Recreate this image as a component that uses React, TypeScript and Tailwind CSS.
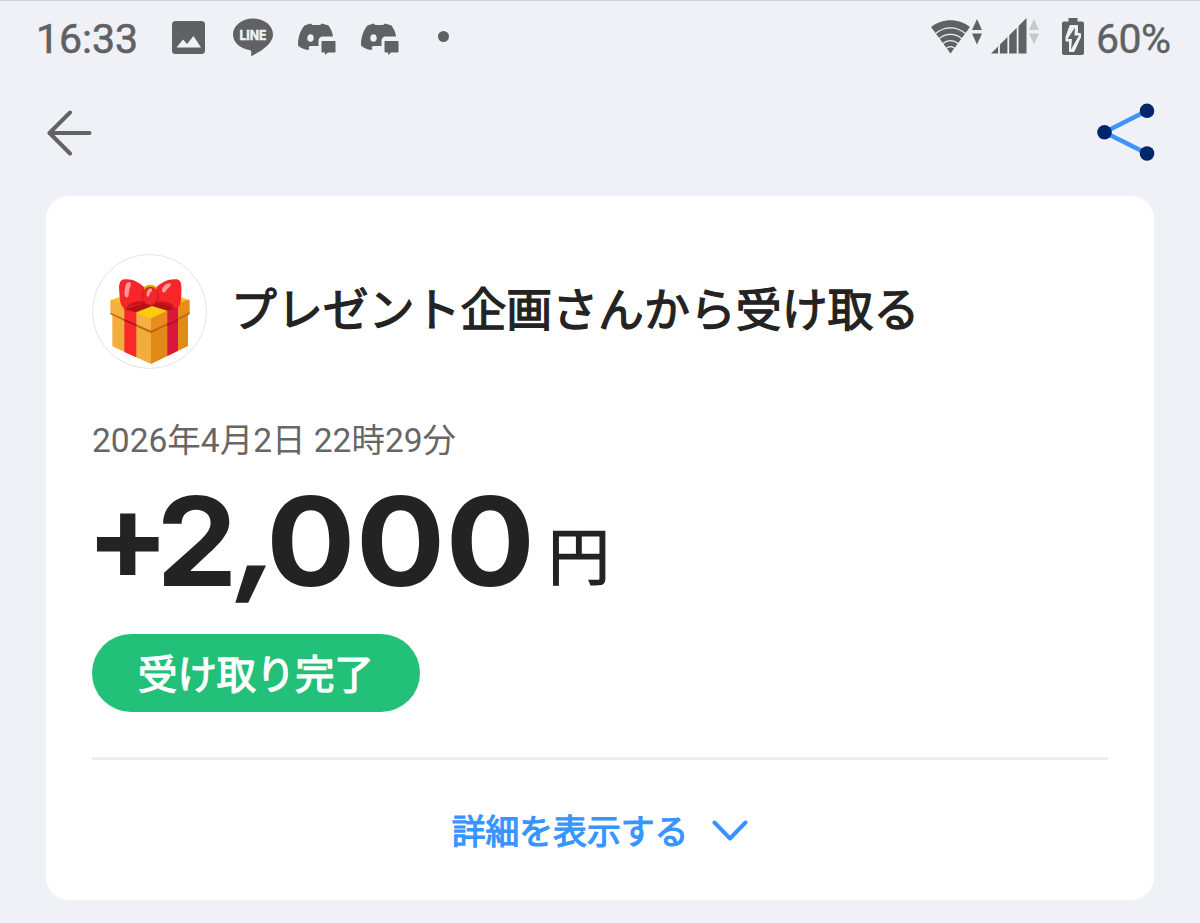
import type { ReactNode } from "react";

function ImageIcon() {
  return (
    <svg width="33" height="33" viewBox="0 0 33 33" className="block">
      <rect width="33" height="33" rx="3.5" fill="#5f6164" />
      <path d="M4.5 26.5L11 18.5L15 23L21.5 15L29 26.5Z" fill="#f0f1f6" />
    </svg>
  );
}

function LineIcon() {
  return (
    <svg width="40" height="39" viewBox="0 0 40 39" className="block">
      <path d="M20 0.5C9 0.5 0 7.500 0 16.500C0 24.500 7 30.500 16.500 32C18.500 32.500 18.500 33.500 18 38C23 36 40 27.500 40 16.500C40 7.500 31 0.500 20 0.500Z" fill="#5f6164" />
      <text x="20" y="21.500" textAnchor="middle" textLength="27" lengthAdjust="spacingAndGlyphs" fill="#f0f1f6" stroke="#f0f1f6" strokeWidth="0.3" className="font-['Inter',sans-serif] text-[12.5px] font-extrabold">LINE</text>
    </svg>
  );
}

function DiscordIcon() {
  return (
    <svg width="38" height="32" viewBox="0 0 38 32" className="block">
      <path d="M6.500 2.500L12.500 0.500L14.500 2H22L24 0.500L30.500 2.500C33 6 34.500 9.500 35 13.500H25.500C22 13.500 20.500 15.500 20.500 18V23H12L10.500 24.500L11.500 26L9.500 27C5.500 26.500 2 24.500 0 22.500C0 14 2 8 6.500 2.500Z" fill="#5f6164" />
      <ellipse cx="12.500" cy="15" rx="3.200" ry="3.800" fill="#f0f1f6" />
      <path d="M24.500 18H36.500Q37.500 18 37.500 19V28.500Q37.500 29.500 36.500 29.500H30L27 32V29.500H24.500Q23.500 29.500 23.500 28.500V19Q23.500 18 24.500 18Z" fill="#5f6164" />
    </svg>
  );
}

function Arrows({ color }: { color: string }) {
  return (
    <svg width="10" height="26" viewBox="0 0 10 26" className="block" fill={color}>
      <path d="M5 0L10 11H0Z" />
      <path d="M0 14.500H10L5 25.500Z" />
    </svg>
  );
}

function WifiIcon() {
  return (
    <svg width="39" height="34" viewBox="0 0 39 34" className="block">
      <path d="M0 7C11 -2 28 -2 39 7L19.500 33.500Z" fill="#5f6164" />
      <g fill="none" stroke="#f0f1f6" strokeWidth="1.200">
        <path d="M4.500 13.500C14 6 25 6 34.500 13.500" />
        <path d="M8 18.800C15 13 24 13 31 18.800" />
        <path d="M11.500 23.800C17 19.500 22 19.500 27.500 23.800" />
        <path d="M15 28.500C18 26 21 26 24 28.500" />
      </g>
    </svg>
  );
}

function SignalIcon() {
  return (
    <svg width="36" height="36" viewBox="0 0 36 36" className="block">
      <path d="M0 35.500L35.500 0V35.500Z" fill="#5f6164" />
      <path d="M8 25V36M17.300 16V36M26.600 7V36" stroke="#f0f1f6" strokeWidth="1.800" />
    </svg>
  );
}

function BatteryIcon() {
  return (
    <svg width="22" height="37" viewBox="0 0 22 37" className="block">
      <path d="M6.500 0H15.500V3.500H20Q22 3.500 22 5.500V35Q22 37 20 37H2Q0 37 0 35V5.500Q0 3.500 2 3.500H6.500Z" fill="#5f6164" />
      <path d="M8 7.500H15.500V15.500H18.500V19L12 33.500H7.500V23H4V19Z" fill="#f0f1f6" stroke="#f0f1f6" strokeWidth="1" strokeLinejoin="round" />
      <path d="M13 9.500L5.500 21H10L9 31.500L17 17.500H12.500Z" fill="#5f6164" />
    </svg>
  );
}

function BackIcon() {
  return (
    <svg width="46" height="46" viewBox="0 0 46 46" fill="none" stroke="#636363" strokeWidth="4" strokeLinecap="round" strokeLinejoin="round" className="block">
      <path d="M43.500 23H3.500M24 2.500L3.500 23L24 43.500" />
    </svg>
  );
}

function ShareIcon() {
  return (
    <svg width="58" height="58" viewBox="0 0 58 58" className="block">
      <path d="M50 7.800L7.500 29.300L50 50.500" fill="none" stroke="#3f93fb" strokeWidth="4.500" />
      <g fill="#00266b">
        <circle cx="50" cy="7.800" r="7.300" />
        <circle cx="7.500" cy="29.300" r="7.300" />
        <circle cx="50" cy="50.500" r="7.300" />
      </g>
    </svg>
  );
}

function GiftIcon() {
  return (
    <svg width="115" height="115" viewBox="36 41 345 345" className="block">
      <circle cx="208.500" cy="213.500" r="171" fill="#fff" stroke="#e4e4e6" strokeWidth="3" />
      {/* box */}
      <path d="M93 180L212 136L328 180L215 232Z" fill="#fcc21b" />
      <path d="M97 212L213 268V371L97 318Z" fill="#f3ad3c" />
      <path d="M213 268L324 212V317L213 371Z" fill="#e28a18" />
      <path d="M91 181Q92 175 99 179L213 231V275L91 219Z" fill="#f6b042" />
      <path d="M213 231L322 178Q329 176 329 183V218L213 275Z" fill="#e88d1c" />
      <path d="M91 217L213 271L329 216V222L213 279L91 222Z" fill="#bd6813" />
      <path d="M168 219L218 197L264 210L213 234Z" fill="#fccb0b" />
      {/* ribbon */}
      <path d="M133 195L169 195V351L133 335Z" fill="#f9292b" />
      <path d="M262 200L294 190V331L262 347Z" fill="#d9163b" />
      <path d="M133 236L169 252V258L133 242ZM262 252L294 236V242L262 258Z" fill="#b70f24" />
      <path d="M133 191L208 178L294 190V204L262 211L216 197L169 216L133 207Z" fill="#b61216" />
      {/* bow */}
      <ellipse cx="211" cy="148" rx="21" ry="15" fill="#f4a20b" />
      <path d="M193 141C177 124 154 114 133 117C117 119 116 136 118 154C119 178 121 202 138 206C153 198 178 192 193 190Z" fill="#f6262a" />
      <path d="M229 141C245 124 268 114 291 117C306 120 305 140 304 158C303 182 302 202 287 205C270 196 247 190 231 190Z" fill="#f6262a" />
      <path d="M138 202C151 185 176 179 192 185V192C173 191 153 197 138 202ZM230 185C249 180 274 186 286 201C270 196 250 191 230 192Z" fill="#c61519" />
      <ellipse cx="211" cy="168" rx="24" ry="27" fill="#f0282b" stroke="#c3161b" strokeWidth="3" />
      <path d="M136 137C140 124 151 121 153 132C151 142 147 148 146 164C144 176 134 171 133 160Z" fill="#fb9a9b" />
      <path d="M246 146C252 134 264 126 272 130C276 137 262 142 258 152C252 160 244 157 246 146Z" fill="#fb9a9b" />
      <path d="M200 160C201 147 211 140 216 146C218 153 210 155 208 164C206 172 199 170 200 160Z" fill="#fb9a9b" />
    </svg>
  );
}

function StatusBar() {
  return (
    <div className="flex h-[78px] items-start border-t border-[#cfd0d5] pl-[36px] font-['Roboto',sans-serif] text-[#5f6164]">
      <span className="mt-[13px] w-[136px] text-[41px] leading-[50px] [-webkit-text-stroke:0.6px_#5f6164]">16:33</span>
      <div className="mt-[20px]"><ImageIcon /></div>
      <div className="mt-[17px] ml-[28px]"><LineIcon /></div>
      <div className="mt-[22px] ml-[25px]"><DiscordIcon /></div>
      <div className="mt-[22px] ml-[25px]"><DiscordIcon /></div>
      <div className="mt-[30px] ml-[39px] size-[11px] rounded-full bg-[#5f6164]" />
      <div className="mt-[19px] ml-auto"><WifiIcon /></div>
      <div className="mt-[18px] ml-[2px]"><Arrows color="#5f6164" /></div>
      <div className="mt-[17px] ml-[9px]"><SignalIcon /></div>
      <div className="mt-[18px] ml-[2px]"><Arrows color="#c8c9cd" /></div>
      <div className="mt-[17px] ml-[23px]"><BatteryIcon /></div>
      <span className="mt-[13px] ml-[12px] w-[104px] text-[41px] leading-[50px] tracking-[-0.5px] [-webkit-text-stroke:0.4px_#5f6164]">60%</span>
    </div>
  );
}

function Card({ children }: { children: ReactNode }) {
  return <main className="mx-[46px] h-[704px] rounded-[23px] bg-white px-[46px] pt-[58px]">{children}</main>;
}

function Amount() {
  return (
    <span className="ml-[-6px] w-[448px] font-['Inter',sans-serif] text-[123px] leading-[120px] font-bold whitespace-nowrap">
      <span className="inline-block -translate-y-[6px] tracking-[-12px]">+</span>
      <span className="inline-block translate-x-px scale-x-[1.05] tracking-[-4px]">2</span>
      <span className="inline-block translate-x-[9px] -translate-y-[7px] -skew-x-[9deg] scale-x-[1.05] tracking-[-8px]">,</span>
      <span className="ml-[1.5px] inline-block origin-left scale-x-[1.08] tracking-[0.2px]">000</span>
    </span>
  );
}

export default function App() {
  return (
    <div className="h-[923px] w-[1200px] overflow-hidden bg-[#f0f1f6] font-['Noto_Sans_CJK_JP',sans-serif] text-[#232323]" lang="ja">
      <StatusBar />
      <header className="flex h-[118px] items-start justify-between pr-[45px] pl-[46px]">
        <button className="mt-[32px]" aria-label="戻る"><BackIcon /></button>
        <button className="mt-[25px]" aria-label="共有"><ShareIcon /></button>
      </header>
      <Card>
        <div className="flex h-[115px] items-start">
          <GiftIcon />
          <h1 className="mt-[22px] ml-[24px] text-[45.9px] leading-[60px] font-normal whitespace-nowrap [-webkit-text-stroke:1.3px_#232323]">プレゼント企画さんから受け取る</h1>
        </div>
        <p className="mt-[52px] h-[40px] font-['Roboto','Noto_Sans_CJK_JP',sans-serif] text-[33.5px] leading-[40px] text-[#666]">2026年4月2日 22時29分</p>
        <div className="mt-[21px] flex h-[120px] items-start">
          <Amount />
          <span className="mt-[31px] ml-[14px] text-[62px] leading-[80px] [-webkit-text-stroke:1.2px_#232323]">円</span>
        </div>
        <div className="mt-[32px] flex h-[78px] w-[328px] items-center justify-center rounded-full bg-[#23c07a] pb-[3px] text-[39.3px] leading-[50px] text-white [-webkit-text-stroke:1.3px_white]">受け取り完了</div>
        <div className="mt-[45px] h-[3px] bg-[#ececed]" />
        <button className="mt-[45px] flex h-[50px] w-full items-center justify-center text-[33.8px] leading-[50px] text-[#3895ff] [-webkit-text-stroke:1.2px_#3895ff]">
          詳細を表示する
          <svg width="36" height="22" viewBox="0 0 36 22" fill="none" stroke="#3895ff" strokeWidth="4" strokeLinecap="round" strokeLinejoin="round" className="mt-[2px] ml-[24px]">
            <path d="M2.500 2.500L18 18.500L33.500 2.500" />
          </svg>
        </button>
      </Card>
    </div>
  );
}
